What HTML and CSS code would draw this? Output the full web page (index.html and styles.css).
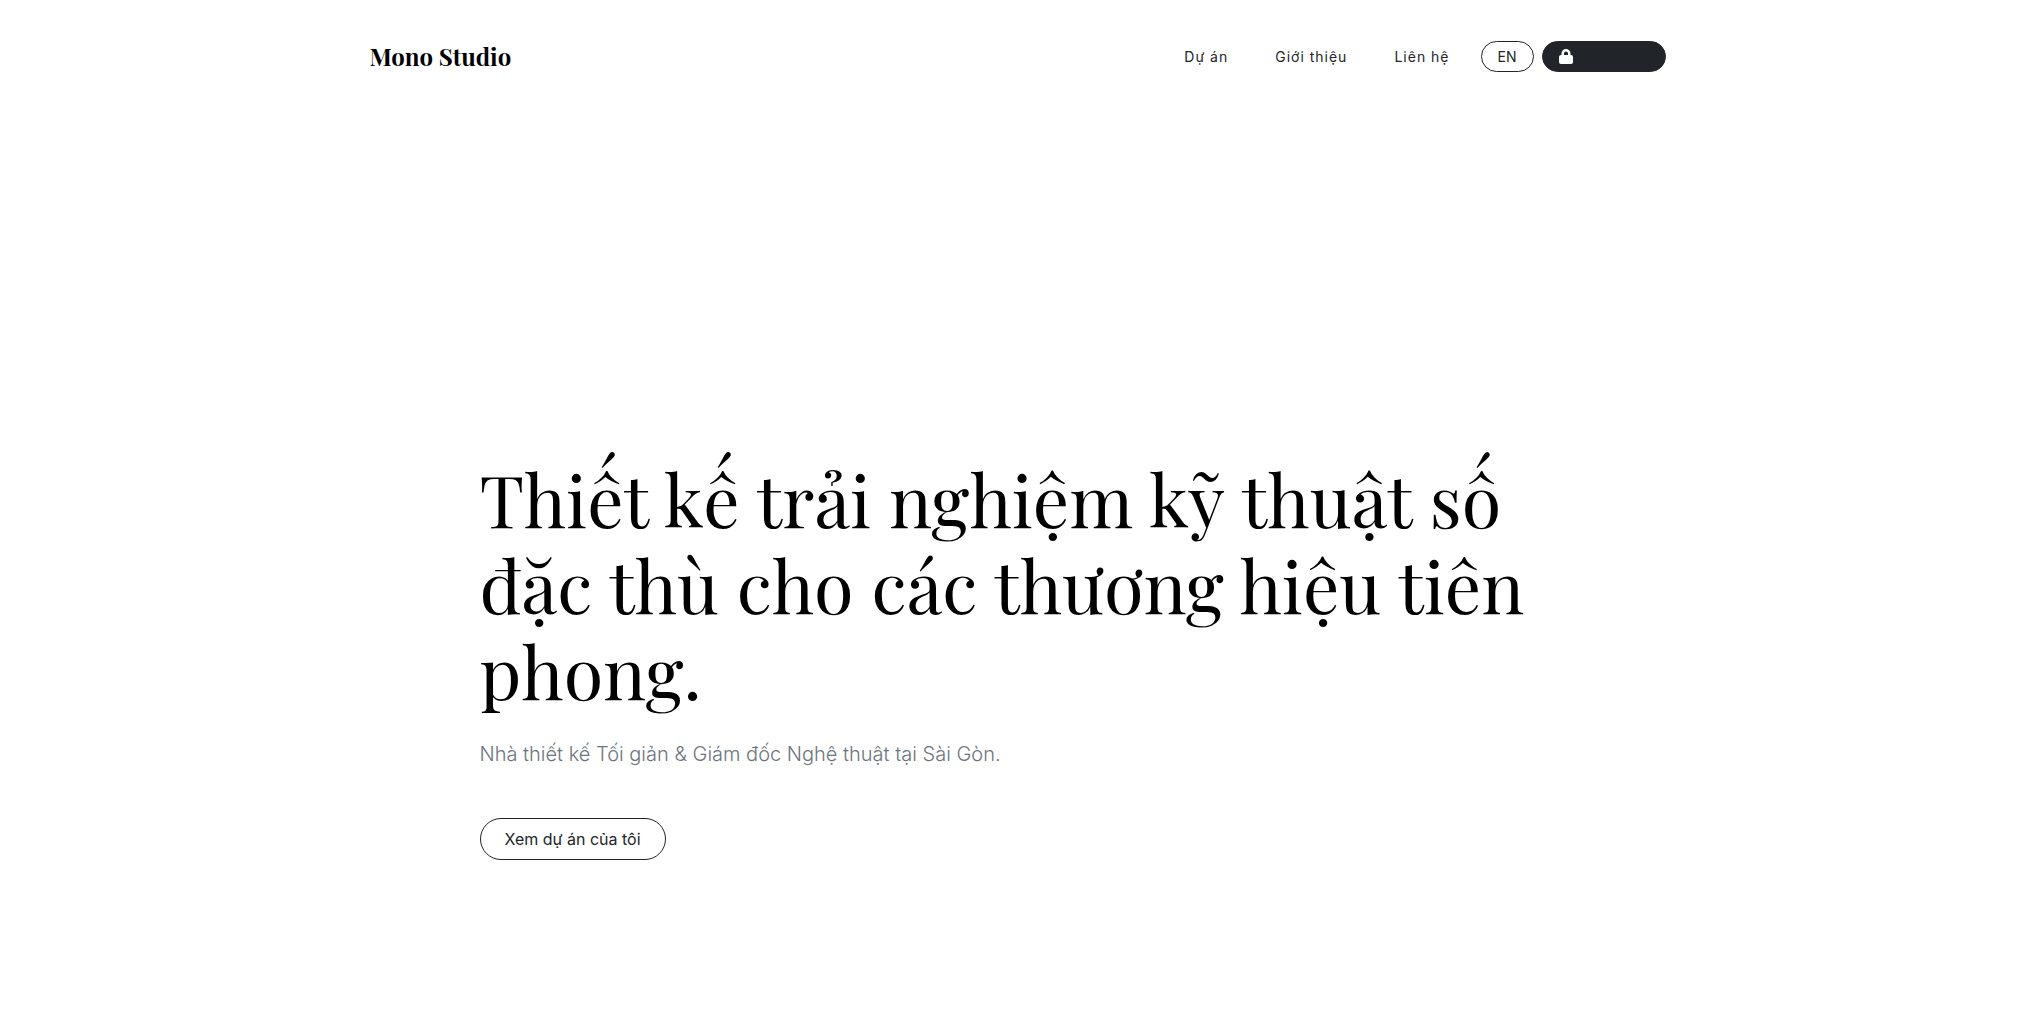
FILE: index.html
```html
<!DOCTYPE html>
<html lang="vi">
<head>
    <meta charset="UTF-8">
    <meta name="viewport" content="width=device-width, initial-scale=1.0">
    <title>Mono Studio</title>
    <link rel="stylesheet" href="styles.css">
</head>
<body>

    <header class="navbar">
        <div class="container navbar-inner">
            <a class="brand" href="#">Mono Studio</a>
            <nav class="nav">
                <a class="nav-link" href="#projects">Dự án</a>
                <a class="nav-link" href="#about">Giới thiệu</a>
                <a class="nav-link" href="#contact">Liên hệ</a>
            </nav>
            <div class="actions">
                <button class="btn btn-sm btn-outline" type="button">EN</button>
                <button class="btn btn-sm btn-dark" type="button" aria-label="Admin">
                    <svg class="icon-lock" viewBox="0 0 14 15" aria-hidden="true">
                        <path d="M5 4.5V6h4V4.5a2 2 0 0 0-4 0zM2.5 6V4.500a4.500 4.500 0 0 1 9 0V6h.5a2 2 0 0 1 2 2v5a2 2 0 0 1-2 2H2a2 2 0 0 1-2-2V8a2 2 0 0 1 2-2z"/>
                    </svg>
                </button>
            </div>
        </div>
    </header>

    <main class="hero">
        <div class="container">
            <div class="hero-content">
                <h1 class="hero-title">Thiết kế trải nghiệm kỹ thuật số đặc thù cho các thương hiệu tiên phong.</h1>
                <p class="hero-lead">Nhà thiết kế Tối giản &amp; Giám đốc Nghệ thuật tại Sài Gòn.</p>
                <a class="btn btn-lg btn-outline" href="#projects">Xem dự án của tôi</a>
            </div>
        </div>
    </main>

</body>
</html>
```

FILE: styles.css
```css
/* Global Styles */
* {
    box-sizing: border-box;
}

body {
    margin: 0;
    min-height: 100vh;
    display: flex;
    flex-direction: column;
    font-family: Inter, "Liberation Sans", sans-serif;
    font-size: 16px;
    line-height: 24px;
    color: #212529;
    background-color: #fff;
}

.container {
    width: 100%;
    max-width: 1320px;
    margin: 0 auto;
}

/* Navbar */
.navbar {
    padding: 32px 0;
}

.navbar-inner {
    display: flex;
    align-items: center;
    padding: 0 12px;
}

.brand {
    margin-right: auto;
    font-family: "Playfair Display", "Liberation Serif", serif;
    font-size: 24px;
    font-weight: 700;
    line-height: 49px;
    color: #000;
    text-decoration: none;
}

.nav {
    display: flex;
    gap: 47px;
    margin-right: 31px;
}

.nav-link {
    font-size: 14px;
    letter-spacing: 1px;
    color: #212529;
    text-decoration: none;
}

.actions {
    display: flex;
    gap: 8px;
}

/* Buttons */
.btn {
    display: inline-flex;
    align-items: center;
    border: 1px solid #212529;
    border-radius: 50px;
    font-family: inherit;
    color: #212529;
    text-decoration: none;
    cursor: pointer;
}

.btn-sm {
    height: 31px;
    padding: 0 16px;
    font-size: 14px;
}

.btn-lg {
    height: 42px;
    padding: 0 24px;
    font-size: 16px;
}

.btn-outline {
    background-color: transparent;
}

.btn-dark {
    width: 124px;
    background-color: #212529;
    color: #fff;
}

.icon-lock {
    width: 14px;
    height: 15px;
    fill: currentColor;
}

/* Hero */
.hero {
    flex-grow: 1;
    display: flex;
    align-items: center;
    padding-top: 192px;
}

.hero-content {
    width: 83.3333%;
    margin: 0 auto;
    padding: 0 12px;
}

.hero-title {
    margin: 0 0 24px;
    font-family: "Playfair Display", "Liberation Serif", serif;
    font-size: 72px;
    font-weight: 400;
    line-height: 86px;
    color: #000;
}

.hero-lead {
    margin: 0 0 47px;
    font-size: 20px;
    font-weight: 300;
    line-height: 34px;
    color: #6c757d;
}
```
